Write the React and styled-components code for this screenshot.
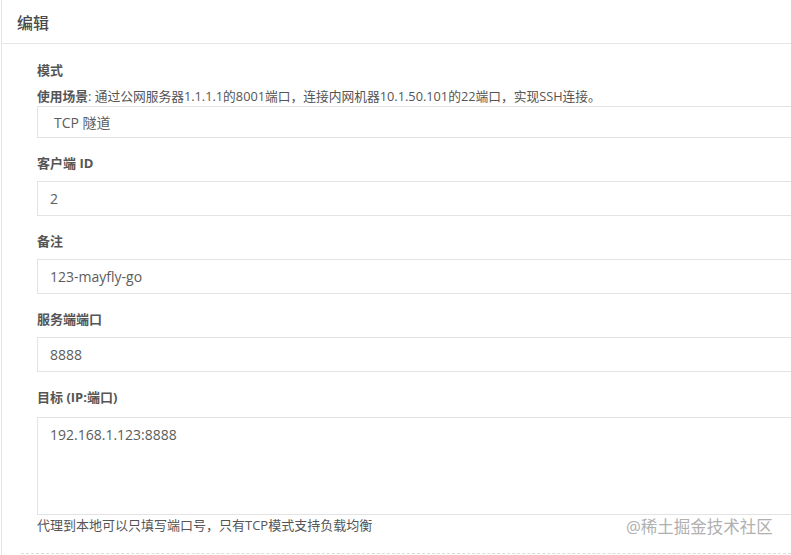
import React from 'react'
import styled, { createGlobalStyle } from 'styled-components';

const Global = createGlobalStyle`
    body {
        margin: 0;
        background: #fff;
        overflow: hidden;
        font-family: "Open Sans", "Noto Sans CJK SC", sans-serif;
    }
`;

const Panel = styled.div`
    position: relative;
    width: 830px;
    height: 555px;
    border-left: 1px solid #e6e6e6;
    margin-left: 1px;
    box-sizing: border-box;
    overflow: hidden;
`;
const Header = styled.div`
    height: 43px;
    padding: 0 15px;
    display: flex;
    align-items: center;
    border-bottom: 1px solid #e6e6e6;
    font-size: 16px;
    font-weight: 500;
    color: #4a4a4a;
`;
const Body = styled.div`
    padding: 17px 0 0 35px;
`;
const Group = styled.div`
    margin-bottom: 16px;
`;
const Label = styled.div`
    font-size: 13px;
    line-height: 18px;
    font-weight: 700;
    color: #555;
    margin-bottom: ${p => p.$gap ?? 9}px;
`;
const Hint = styled.div`
    font-size: 12.75px;
    line-height: 18px;
    color: #555;
    margin-bottom: 1px;
    b { font-weight: 700; }
`;
const Field = styled.div`
    height: ${p => p.$h}px;
    box-sizing: border-box;
    border: 1px solid #e3e3e3;
    padding: ${p => p.$select ? '6px 16px' : '7px 12px'};
    font-size: 14px;
    line-height: 20px;
    color: #5c5c5c;
`;
const Help = styled.div`
    font-size: 13px;
    line-height: 18px;
    color: #555;
    padding-top: 1px;
`;
const Dotted = styled.div`
    position: absolute;
    left: 19px;
    right: 0;
    bottom: 1px;
    border-bottom: 1px dashed #dcdcdc;
`;
const Watermark = styled.div`
    position: absolute;
    left: 624px;
    top: 514px;
    font-size: 16.5px;
    color: #b0b0b0;
`;

export default function App() {
    return (
        <>
            <Global />
            <Panel>
                <Header>编辑</Header>
                <Body>
                    <Group>
                        <Label $gap={8}>模式</Label>
                        <Hint><b>使用场景</b>: 通过公网服务器1.1.1.1的8001端口，连接内网机器10.1.50.101的22端口，实现SSH连接。</Hint>
                        <Field $h={32} $select>TCP 隧道</Field>
                    </Group>
                    <Group>
                        <Label>客户端 ID</Label>
                        <Field $h={35}>2</Field>
                    </Group>
                    <Group>
                        <Label>备注</Label>
                        <Field $h={35}>123-mayfly-go</Field>
                    </Group>
                    <Group>
                        <Label>服务端端口</Label>
                        <Field $h={35}>8888</Field>
                    </Group>
                    <Label $gap={11}>目标 (IP:端口)</Label>
                    <Field $h={98}>192.168.1.123:8888</Field>
                    <Help>代理到本地可以只填写端口号，只有TCP模式支持负载均衡</Help>
                </Body>
                <Dotted />
                <Watermark>@稀土掘金技术社区</Watermark>
            </Panel>
        </>
    )
}
